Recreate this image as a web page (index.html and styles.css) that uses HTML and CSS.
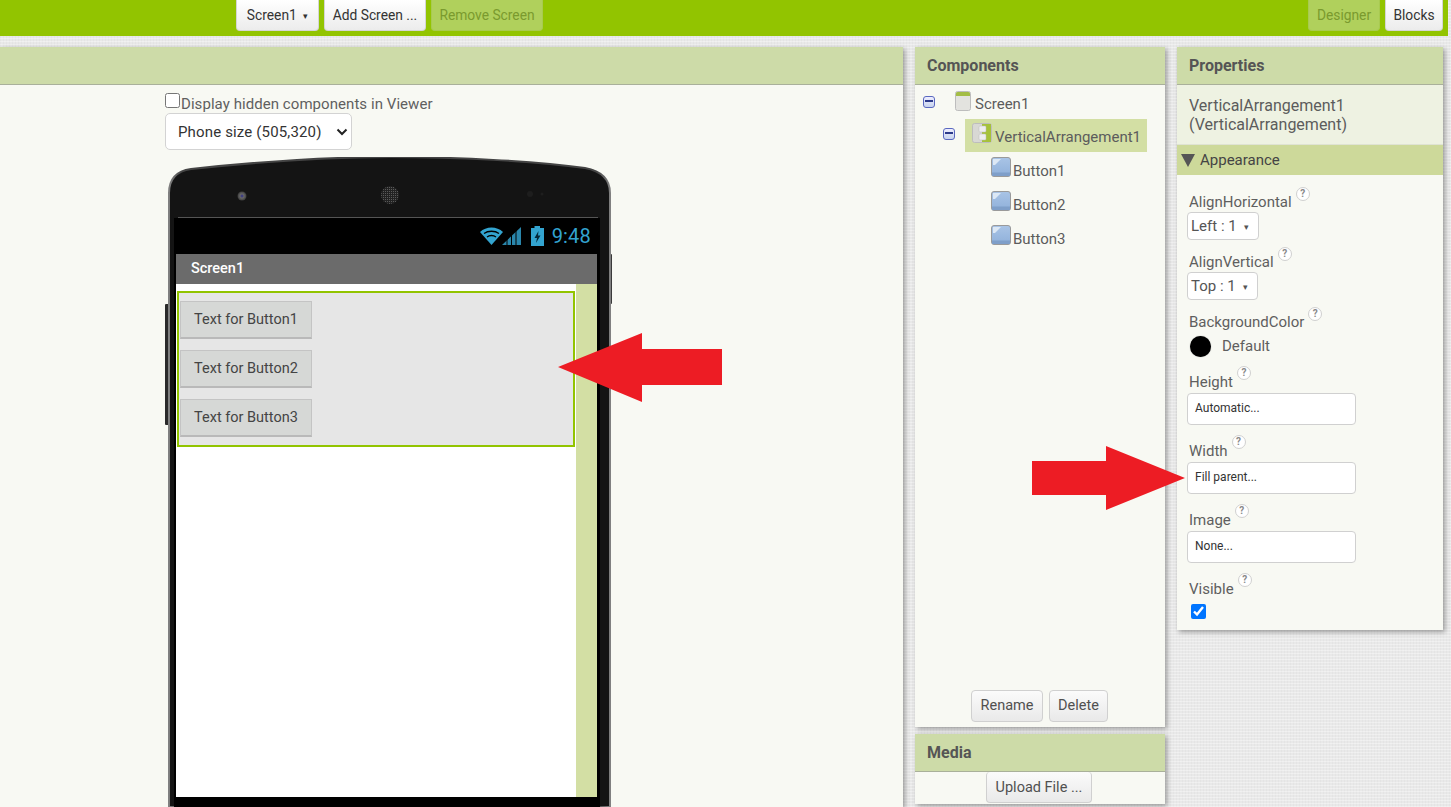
FILE: index.html
```html
<!DOCTYPE html>
<html lang="en">
<head>
<meta charset="utf-8">
<title>Designer</title>
<link rel="stylesheet" href="styles.css">
</head>
<body>
<header class="topbar">
  <button class="tb-btn tb-screen">Screen1 <span class="caret">▾</span></button>
  <button class="tb-btn tb-add">Add Screen ...</button>
  <button class="tb-btn tb-off tb-remove">Remove Screen</button>
  <span class="spacer"></span>
  <button class="tb-btn tb-off tb-designer">Designer</button>
  <button class="tb-btn tb-blocks">Blocks</button>
</header>

<main class="workspace">
  <section class="panel viewer">
    <div class="panel-head"></div>
    <div class="viewer-body">
      <label class="hidden-toggle"><input type="checkbox" class="hidden-check">Display hidden components in Viewer</label>
      <select class="size-select"><option>Phone size (505,320)</option></select>
      <div class="phone">
        <svg class="phone-art" width="448" height="650" viewBox="0 0 448 650">
          <defs>
            <linearGradient id="edge" x1="0" x2="1" y1="0" y2="0">
              <stop offset="0" stop-color="#808080"/><stop offset="0.03" stop-color="#444"/>
              <stop offset="0.97" stop-color="#444"/><stop offset="1" stop-color="#808080"/>
            </linearGradient>
            <pattern id="mesh" width="2" height="2" patternUnits="userSpaceOnUse">
              <rect width="2" height="2" fill="#222"/><rect width="1" height="1" fill="#5a5a5a"/>
            </pattern>
            <radialGradient id="lens"><stop offset="0" stop-color="#2a2a90"/><stop offset="0.45" stop-color="#666"/><stop offset="1" stop-color="#3c3c3c"/></radialGradient>
          </defs>
          <rect x="0" y="147" width="4" height="121" rx="1" fill="#2a2a2a"/>
          <rect x="444" y="97" width="3" height="50" rx="1" fill="#3a3a3a"/>
          <path d="M4 650V36C4 22 12 14 26 12C110 3 170 0 225 0C290 0 370 4 420 11C436 14 445 22 445 36V650Z" fill="#141414" stroke="url(#edge)" stroke-width="2"/>
          <rect x="13" y="60" width="420" height="1" fill="#555"/>
          <circle cx="77" cy="39" r="4.500" fill="url(#lens)"/>
          <circle cx="225" cy="38" r="9" fill="url(#mesh)"/>
          <circle cx="365" cy="37" r="3" fill="#1e1e1e"/>
          <circle cx="377" cy="37" r="1.500" fill="#1e1e1e"/>
        </svg>
        <div class="screen">
          <div class="status">
            <svg width="42" height="20" viewBox="0 0 42 20" class="status-icon">
              <path d="M0 6C6 0 17 0 23 6L11.500 19Z" fill="#33a4d0"/>
              <path d="M4 7.500C8 4.500 15 4.500 19 7.500M7 11C9.500 9 13.500 9 16 11" stroke="#000" stroke-width="1.300" fill="none"/>
              <path d="M22 19L41 1V19Z" fill="#2a86ab"/>
              <path d="M27 4V20M31.500 4V20M36 4V20" stroke="#000" stroke-width="1"/>
            </svg>
            <svg width="15" height="20" viewBox="0 0 15 20" class="status-icon battery">
              <path d="M1 2H4.500V0H10V2H14V20H1Z" fill="#33a4d0"/>
              <path d="M8.500 5L4.500 12H7L6 17L10.500 9.500H8Z" fill="#04283a"/>
            </svg>
            <span class="clock">9:48</span>
          </div>
          <div class="app-title">Screen1</div>
          <div class="app-content">
            <div class="form">
              <div class="arrangement">
                <div class="phone-btn">Text for Button1</div>
                <div class="phone-btn">Text for Button2</div>
                <div class="phone-btn">Text for Button3</div>
              </div>
            </div>
            <div class="form-strip"></div>
          </div>
        </div>
      </div>
    </div>
  </section>

  <div class="mid-col">
    <section class="panel components">
      <div class="panel-head">Components</div>
      <div class="tree">
        <div class="tree-row row-screen">
          <span class="minus"></span>
          <svg class="ico-screen" width="16" height="20" viewBox="0 0 16 20">
            <rect x="0.500" y="0.500" width="15" height="19" rx="2" fill="#e3e3df" stroke="#bdbdbd"/>
            <path d="M1 5V2.500A1.500 1.500 0 0 1 2.500 1H13.500A1.500 1.500 0 0 1 15 2.500V5Z" fill="#a3bd45"/>
          </svg>
          <span>Screen1</span>
        </div>
        <div class="tree-row row-arr">
          <span class="minus"></span>
          <div class="selected">
            <svg width="20" height="20" viewBox="0 0 20 20">
              <rect x="0.500" y="0.500" width="19" height="19" rx="2" fill="#d8d8d4" stroke="#bdbdbd"/>
              <rect x="10" y="1" width="9" height="18" fill="#a6c23a"/>
              <rect x="7" y="3" width="7" height="6" rx="1" fill="#eee" stroke="#bbb" stroke-width="0.500"/>
              <rect x="7" y="11" width="7" height="6" rx="1" fill="#eee" stroke="#bbb" stroke-width="0.500"/>
            </svg>
            <span>VerticalArrangement1</span>
          </div>
        </div>
        <div class="tree-row row-btn"><svg class="ico-btn" width="20" height="20" viewBox="0 0 20 20"><use href="#btn-ico"/></svg><span>Button1</span></div>
        <div class="tree-row row-btn"><svg class="ico-btn" width="20" height="20" viewBox="0 0 20 20"><use href="#btn-ico"/></svg><span>Button2</span></div>
        <div class="tree-row row-btn"><svg class="ico-btn" width="20" height="20" viewBox="0 0 20 20"><use href="#btn-ico"/></svg><span>Button3</span></div>
      </div>
      <div class="comp-actions">
        <button class="gray-btn btn-rename">Rename</button>
        <button class="gray-btn btn-delete">Delete</button>
      </div>
    </section>
    <section class="panel media">
      <div class="panel-head">Media</div>
      <div class="media-body"><button class="gray-btn btn-upload">Upload File ...</button></div>
    </section>
  </div>

  <section class="panel properties">
    <div class="panel-head">Properties</div>
    <div class="prop-subject">VerticalArrangement1<br>(VerticalArrangement)</div>
    <div class="prop-group"><span class="tri"></span>Appearance</div>
    <div class="prop-list">
      <div class="prop-label lift">AlignHorizontal<span class="help">?</span></div>
      <div class="mini-select sel-left">Left : 1 <span class="caret">▾</span></div>
      <div class="prop-label lift gap-s">AlignVertical<span class="help">?</span></div>
      <div class="mini-select sel-top">Top : 1 <span class="caret">▾</span></div>
      <div class="prop-label lift gap-s">BackgroundColor<span class="help">?</span></div>
      <div class="swatch-row"><span class="swatch"></span>Default</div>
      <div class="prop-label gap-h">Height<span class="help">?</span></div>
      <div class="prop-input">Automatic...</div>
      <div class="prop-label gap-m">Width<span class="help">?</span></div>
      <div class="prop-input">Fill parent...</div>
      <div class="prop-label gap-m">Image<span class="help">?</span></div>
      <div class="prop-input">None...</div>
      <div class="prop-label gap-m">Visible<span class="help">?</span></div>
      <input type="checkbox" class="visible-check" checked>
    </div>
  </section>
</main>

<svg class="defs-holder" width="0" height="0">
  <defs>
    <linearGradient id="btn-fill" x1="0" y1="0" x2="0" y2="1">
      <stop offset="0" stop-color="#a9c4e6"/><stop offset="1" stop-color="#8fb0da"/>
    </linearGradient>
    <g id="btn-ico">
      <rect x="0.500" y="0.500" width="19" height="19" rx="2.500" fill="url(#btn-fill)" stroke="#9a9a9a"/>
      <path d="M2 2H10L4 8H2Z" fill="#dce8f5"/>
      <rect x="1" y="15.500" width="18" height="3.500" fill="#7f9fc9"/>
    </g>
  </defs>
</svg>

<svg class="arrow arrow-left" width="165" height="70" viewBox="0 0 165 70"><path d="M0 34L84 0V16H164V52H84V69Z" fill="#ed1c24"/></svg>
<svg class="arrow arrow-right" width="154" height="66" viewBox="0 0 154 66"><path d="M0 15H74V0L153 32L74 64V49H0Z" fill="#ed1c24"/></svg>
</body>
</html>
```
FILE: styles.css
```css
* { box-sizing: border-box; }
html, body { margin: 0; height: 807px; overflow: hidden; }
body {
  position: relative;
  font-family: Roboto, "Liberation Sans", sans-serif;
  font-size: 15px;
  color: #5c5c5c;
  background-color: #e9e9e9;
  background-image:
    repeating-linear-gradient(0deg, rgba(255,255,255,.35) 0 1px, transparent 1px 3px),
    repeating-linear-gradient(90deg, rgba(0,0,0,.025) 0 1px, transparent 1px 3px);
}
button { font-family: inherit; cursor: pointer; }

.topbar {
  display: flex;
  gap: 5px;
  width: 1448px;
  height: 36px;
  padding: 0 5px 0 236px;
  background: #92c400;
  align-items: flex-start;
}
.spacer { flex: 1; }
.tb-btn {
  height: 31px;
  padding: 0;
  border: 1px solid #d5d5d5;
  border-top: 0;
  border-radius: 0 0 4px 4px;
  background: linear-gradient(#fff, #ececec);
  font-size: 13.800px;
  color: #333;
  text-align: center;
}
.tb-screen { width: 83px; }
.tb-add { width: 102px; }
.tb-remove { width: 112px; }
.tb-designer { width: 72px; }
.tb-blocks { width: 58px; }
.tb-off { background: #b0d05c; border-color: #a8ca50; color: #7a9a2e; }
.caret { font-size: 9px; margin-left: 3px; vertical-align: 1px; }

.workspace {
  display: flex;
  align-items: flex-start;
  height: 771px;
  padding-top: 11px;
}
.panel {
  background: #f8f9f3;
  box-shadow: 2px 2px 5px rgba(0,0,0,.35);
}
.panel-head {
  height: 38px;
  padding: 0 12px;
  background: #cddba8;
  border-bottom: 1px solid #a9b09a;
  font-size: 16px;
  font-weight: 700;
  line-height: 37px;
  color: #555;
}
.viewer { width: 903px; height: 760px; flex: none; }
.viewer-body {
  height: 722px;
  padding: 8px 0 0 165px;
}
.hidden-toggle { display: block; height: 20px; line-height: 22px; letter-spacing: .06px; white-space: nowrap; color: #5f5f5f; }
.hidden-check { width: 15px; height: 15px; margin: 0 1px 0 0; vertical-align: 1px; }
.size-select {
  display: block;
  width: 187px;
  height: 37px;
  padding: 0 0 0 12px;
  appearance: none;
  background-color: #fff;
  background-image: url("data:image/svg+xml,%3Csvg xmlns='http://www.w3.org/2000/svg' width='12' height='8' viewBox='0 0 12 8'%3E%3Cpath d='M1.500 1.500L6 6L10.500 1.500' fill='none' stroke='%23222' stroke-width='2'/%3E%3C/svg%3E");
  background-repeat: no-repeat;
  background-position: 170px 14px;
  border: 1px solid #d3d3d3;
  border-radius: 5px;
  font-family: inherit;
  font-size: 15px;
  letter-spacing: .15px;
  color: #333;
}

.phone {
  position: relative;
  width: 448px;
  height: 650px;
  margin-top: 7px;
  padding: 61px 0 0 9px;
}
.phone-art { position: absolute; left: 0; top: 0; }
.screen {
  position: relative;
  width: 426px;
  height: 589px;
  padding: 0 3px 0 2px;
  background: #000;
}
.status {
  display: flex;
  align-items: center;
  justify-content: flex-end;
  height: 36px;
  padding-right: 6px;
}
.status-icon { margin-right: 8px; }
.battery { margin-right: 7px; }
.clock { font-size: 20px; letter-spacing: .2px; color: #33a4d0; line-height: 36px; }
.app-title {
  height: 30px;
  padding-left: 15px;
  background: #6b6b6b;
  color: #fff;
  font-weight: 500;
  font-size: 14.500px;
  line-height: 29px;
}
.app-content { display: flex; height: 513px; background: #fff; }
.form { flex: 1; padding: 7px 1px 0 1px; }
.form-strip { width: 21px; background: #d3dfa4; }
.arrangement {
  height: 156px;
  padding: 8px 1px;
  background: #e6e6e6;
  border: 2px solid #92c400;
  display: flex;
  flex-direction: column;
  align-items: flex-start;
  gap: 11px;
}
.phone-btn {
  width: 132px;
  height: 38px;
  background: #d6d8d6;
  border: 1px solid #c4c4c4;
  border-bottom: 2px solid #b9b9b9;
  color: #444;
  font-size: 14.500px;
  line-height: 36px;
  text-align: center;
}

.mid-col {
  width: 250px;
  margin-left: 12px;
  flex: none;
  display: flex;
  flex-direction: column;
  gap: 7px;
}
.components { height: 680px; display: flex; flex-direction: column; }
.tree { flex: 1; padding: 4px 0 0 8px; }
.tree-row { display: flex; align-items: center; }
.row-screen { height: 30px; }
.row-screen .ico-screen { margin: -6px 4px 0 20px; }
.row-arr { height: 34px; padding-left: 20px; }
.row-btn { height: 34px; padding-left: 68px; }
.row-btn span { margin: 1px 0 0 2px; }
.ico-btn { margin-top: -6px; }
.minus {
  width: 12px;
  height: 12px;
  flex: none;
  border: 1.500px solid #5a68c0;
  border-radius: 3px;
  background: linear-gradient(#eef, #c8d4ee);
  position: relative;
  margin-top: -5px;
}
.minus::after {
  content: "";
  position: absolute;
  left: 1px; right: 1px; top: 3.500px;
  height: 2px;
  background: #2c3a8a;
}
.selected {
  display: flex;
  align-items: center;
  width: 182px;
  height: 33px;
  margin: 0 0 2px 10px;
  padding-left: 7px;
  background: #d3dfa4;
  white-space: nowrap;
}
.selected svg { margin: -5px 3px 0 0; flex: none; }
.selected span { margin-top: 3px; }
.comp-actions {
  display: flex;
  justify-content: flex-start;
  gap: 6px;
  padding: 0 0 5px 56px;
}
.gray-btn {
  height: 32px;
  padding: 0 0 2px;
  background: linear-gradient(#fbfbfb, #e9e9e9);
  border: 1px solid #d0d0d0;
  border-radius: 4px;
  font-size: 14.500px;
  color: #505050;
}
.btn-rename { width: 72px; }
.btn-delete { width: 59px; }
.media { height: 70px; }
.media-body { display: flex; justify-content: center; }
.btn-upload { width: 106px; height: 31px; margin-left: -2px; padding: 0; border-top: 0; }

.properties { width: 266px; height: 583px; margin-left: 12px; flex: none; }
.prop-subject {
  height: 60px;
  padding: 11px 12px 0;
  background: #eef2e2;
  border-bottom: 1px solid #dfe3d3;
  font-size: 16px;
  line-height: 19px;
  color: #5c5c5c;
}
.prop-group {
  display: flex;
  align-items: center;
  height: 30px;
  padding-left: 4px;
  background: #cdd99a;
  color: #444;
  font-size: 15px;
}
.tri {
  width: 0; height: 0;
  margin-right: 5px;
  border-left: 7px solid transparent;
  border-right: 7px solid transparent;
  border-top: 13px solid #555;
}
.prop-list { padding: 16px 12px 0; }
.prop-label { display: flex; align-items: center; height: 20px; color: #5f5f5f; }
.lift { padding-top: 2px; }
.help {
  width: 14px;
  height: 14px;
  margin: -18px 0 0 4px;
  border: 1.500px solid #d0d0d0;
  border-radius: 50%;
  background: #fff;
  font-size: 10px;
  font-weight: 700;
  line-height: 11px;
  text-align: center;
  color: #888;
}
.lift .help { margin-top: -16px; }
.gap-s { margin-top: 11px; }
.gap-h { margin-top: 13px; }
.gap-m { margin-top: 16px; }
.mini-select {
  height: 28px;
  margin: 1px 0 0 -2px;
  padding-left: 3px;
  background: #fff;
  border: 1px solid #d0d0d0;
  border-radius: 4px;
  line-height: 26px;
  color: #555;
  white-space: nowrap;
}
.mini-select .caret { margin-left: 4px; }
.sel-left { width: 72px; }
.sel-top { width: 71px; }
.swatch-row { display: flex; align-items: center; height: 26px; margin-top: 2px; color: #5f5f5f; }
.swatch { width: 21px; height: 21px; margin: 0 11px 0 1px; border-radius: 50%; background: #000; box-shadow: 0 0 1px #777; }
.prop-input {
  width: 169px;
  height: 32px;
  margin: 1px 0 0 -2px;
  padding-left: 7px;
  background: #fff;
  border: 1px solid #d0d0d0;
  border-radius: 4px;
  font-size: 12px;
  line-height: 28px;
  color: #333;
}
.visible-check { display: block; width: 15px; height: 15px; margin: 5px 0 0 2px; }

.defs-holder { position: absolute; }
.arrow { position: absolute; }
.arrow-left { left: 558px; top: 333px; }
.arrow-right { left: 1032px; top: 446px; }
```
